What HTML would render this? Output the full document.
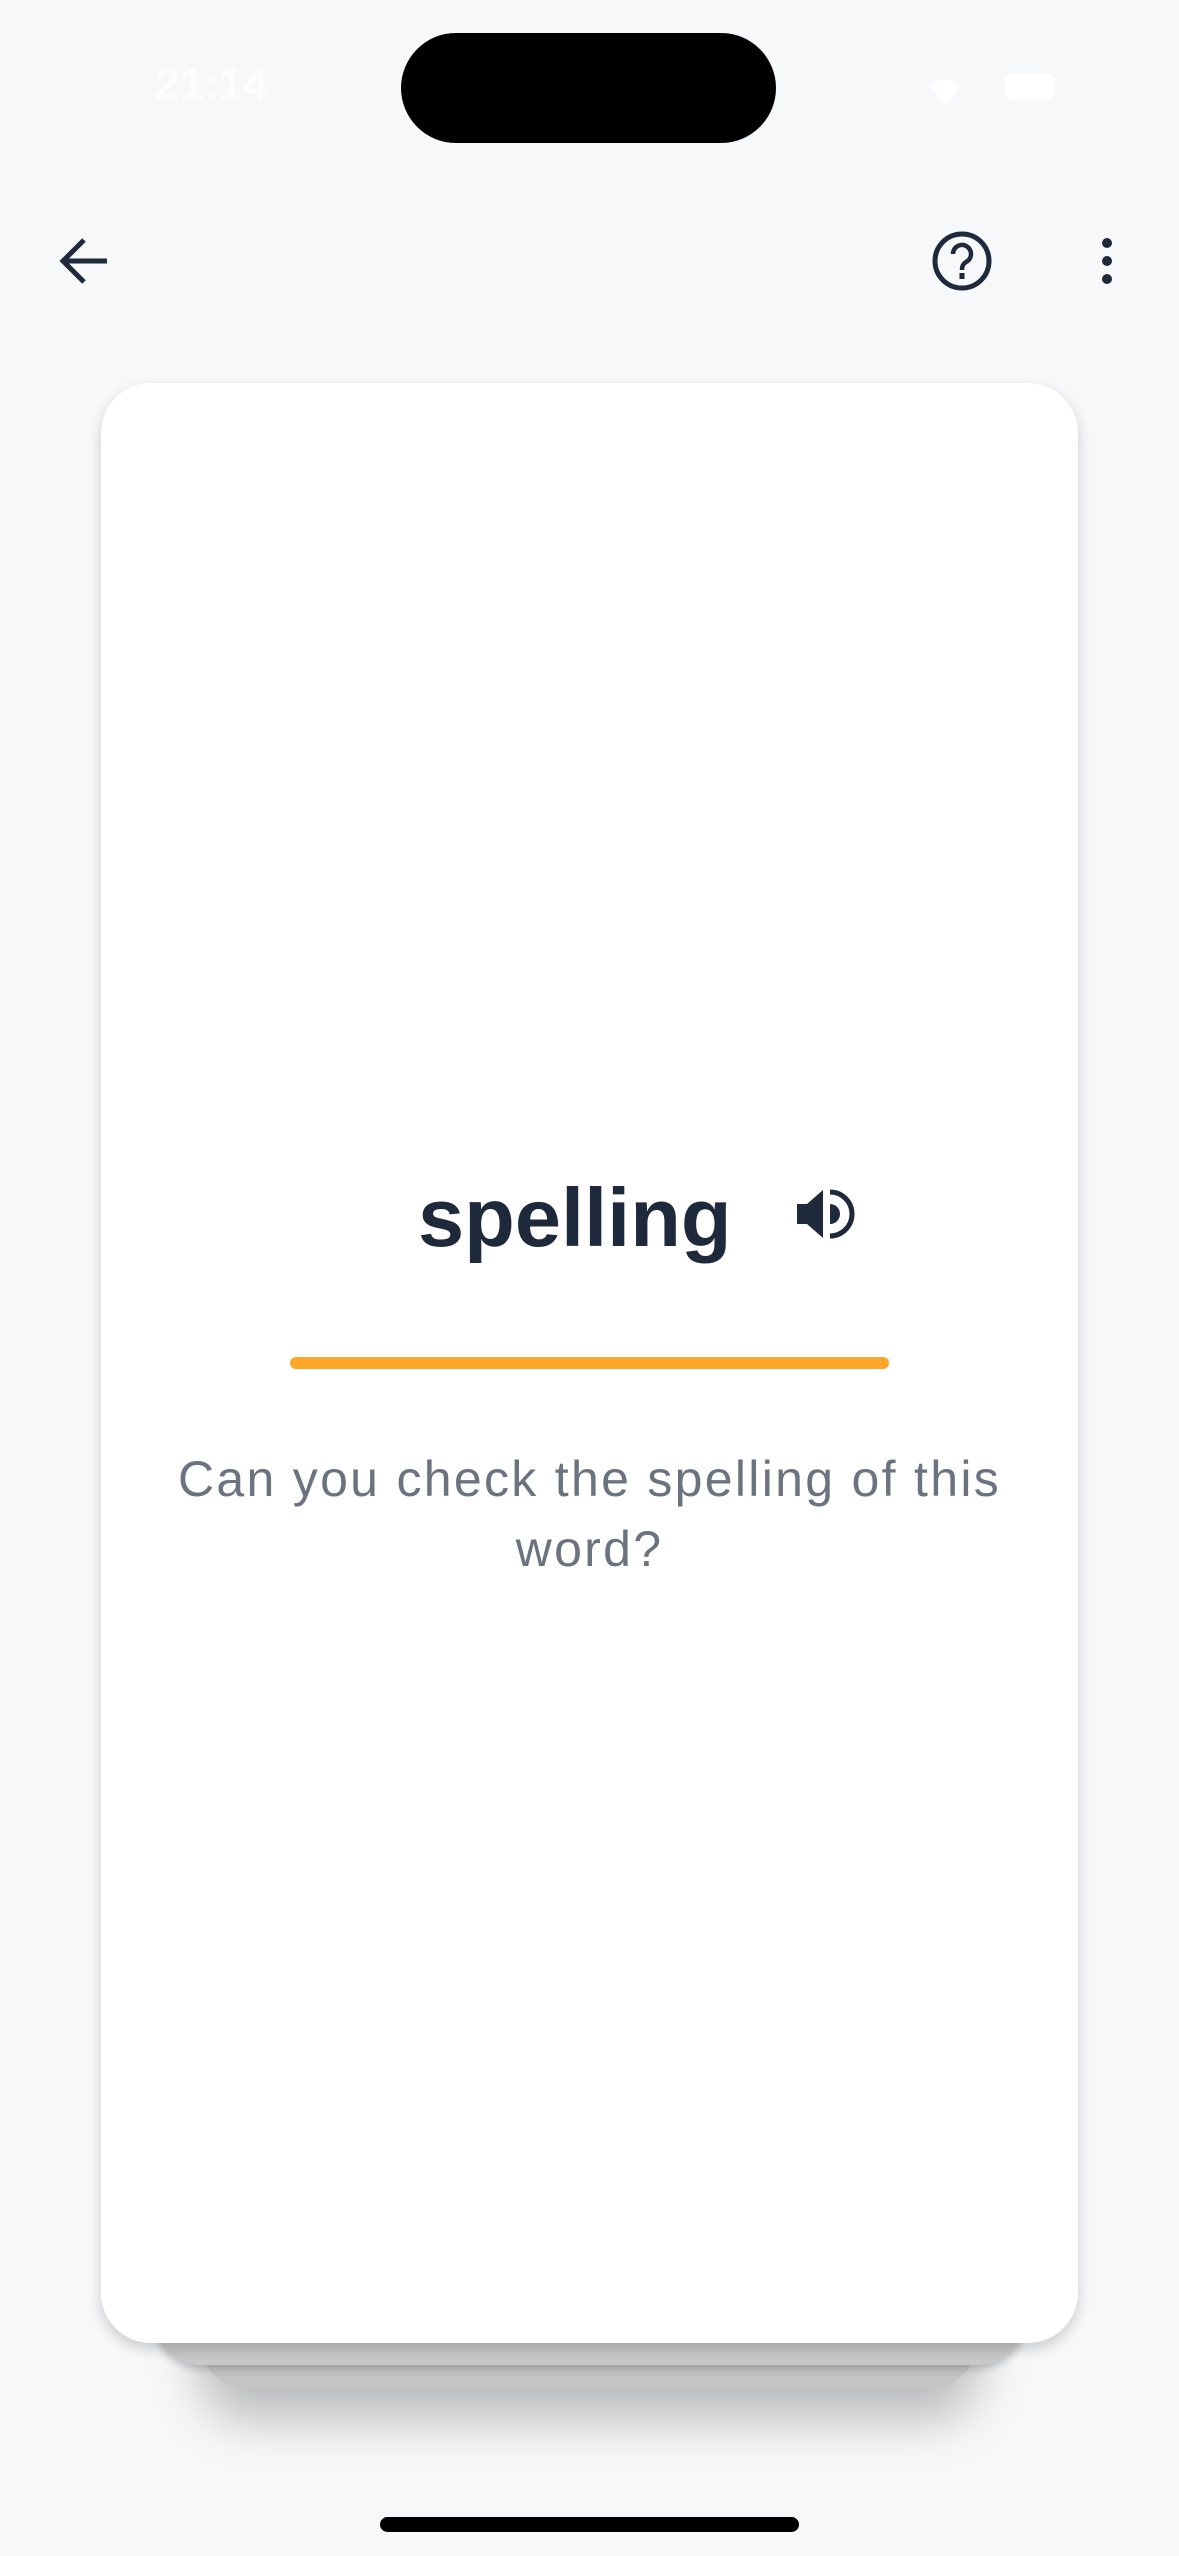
<!DOCTYPE html>
<html><head><meta charset="utf-8"><style>
html,body{margin:0;padding:0}
body{width:1179px;height:2556px;background:#f7f8fa;position:relative;overflow:hidden;font-family:"Liberation Sans",sans-serif}
.abs{position:absolute}
.island{left:401px;top:33px;width:375px;height:110px;background:#000;border-radius:55px}
.time{left:155px;top:60px;color:#fff;font-size:44px;font-weight:bold;opacity:.8}
.card{background:#fff;border-radius:50px}
.home{left:380px;top:2517px;width:419px;height:15px;background:#000;border-radius:8px}
</style></head><body>
<div class="abs island"></div>
<div class="abs time">21:14</div>
<svg class="abs" style="left:920px;top:62px" width="160" height="50"><path d="M10 25 a18 18 0 0 1 30 0 l-15 18z" fill="#fff" opacity=".9"/><rect x="85" y="12" width="50" height="26" rx="8" fill="#fff"/></svg>

<svg class="abs" style="left:55px;top:232px" width="60" height="58"><path d="M52 29 H10 M29 8 L8 29 L29 50" fill="none" stroke="#1e293b" stroke-width="5" stroke-linejoin="miter"/></svg>
<svg class="abs" style="left:928px;top:227px" width="68" height="68"><circle cx="34" cy="34" r="27" fill="none" stroke="#1e293b" stroke-width="5"/><path d="M25 27 a9 9 0 1 1 13 8 c-3 2-4 4-4 8" fill="none" stroke="#1e293b" stroke-width="4.5"/><rect x="31.5" y="46" width="5" height="6" fill="#1e293b"/></svg>
<svg class="abs" style="left:1095px;top:232px" width="24" height="58"><circle cx="12" cy="11" r="5" fill="#1e293b"/><circle cx="12" cy="29" r="5" fill="#1e293b"/><circle cx="12" cy="47" r="5" fill="#1e293b"/></svg>

<div class="abs card" style="left:199px;top:2150px;width:779px;height:239px;background:#c4c4c4;box-shadow:0 30px 50px rgba(0,0,0,.25)"></div>
<div class="abs card" style="left:152px;top:2150px;width:875px;height:215px;background:#c9c9c9;box-shadow:0 4px 8px rgba(0,0,0,.2)"></div>
<div class="abs card" style="left:101px;top:383px;width:977px;height:1960px;box-shadow:0 6px 14px rgba(0,0,0,.18)"></div>

<div class="abs" style="left:418px;top:1168px;font-size:83px;font-weight:bold;color:#1e293b;line-height:100px">spelling</div>
<svg class="abs" style="left:797px;top:1187px" width="62" height="56"><path d="M0 17 H10 L26 3 V51 L10 37 H0Z" fill="#1e293b"/><path d="M33 17 a10 10 0 0 1 0 20Z" fill="#1e293b"/><path d="M33 5 a22 22 0 0 1 0 44" fill="none" stroke="#1e293b" stroke-width="5"/></svg>
<div class="abs" style="left:290px;top:1357px;width:599px;height:12px;background:#fca62a;border-radius:6px"></div>
<div class="abs" style="left:100px;top:1444px;width:979px;text-align:center;font-size:50px;letter-spacing:2.3px;line-height:70px;color:#6b7280">Can you check the spelling of this<br>word?</div>
<div class="abs home"></div>
</body></html>
